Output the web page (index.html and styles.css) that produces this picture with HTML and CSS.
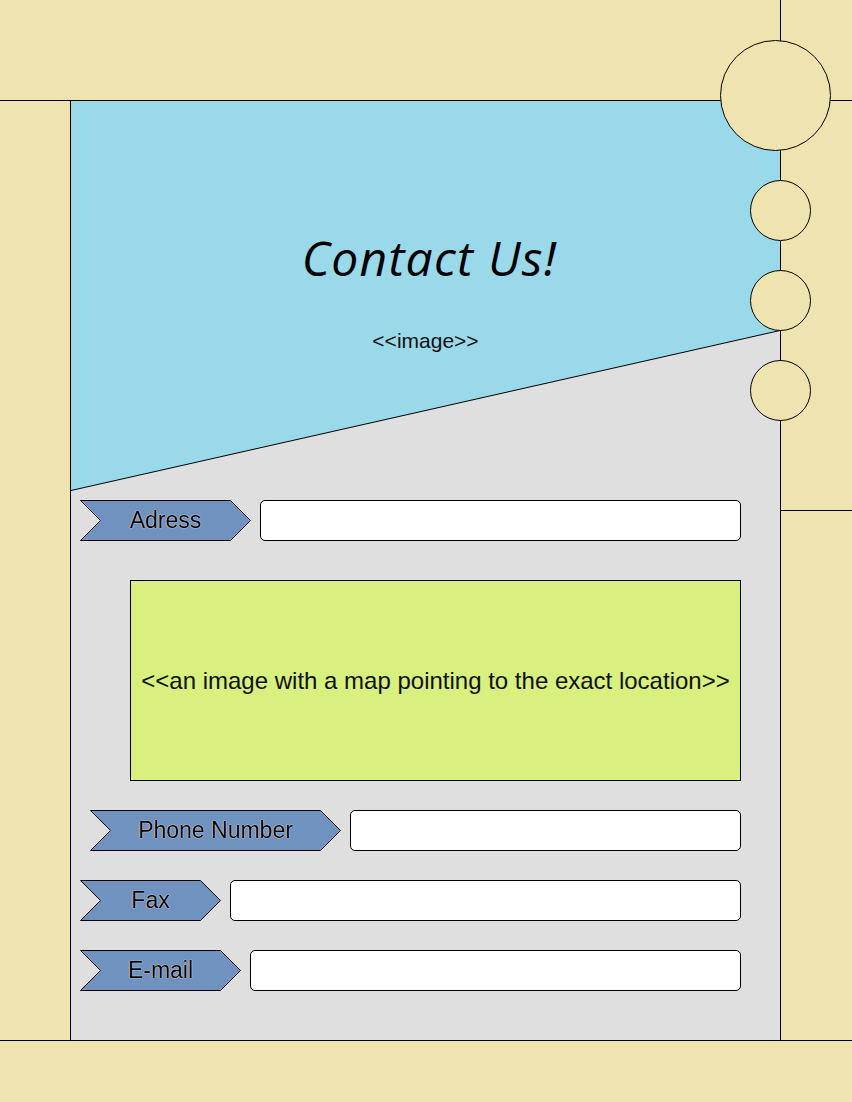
FILE: index.html
```html
<!DOCTYPE html>
<html>
<head>
<meta charset="utf-8">
<title>Contact Us</title>
<link rel="stylesheet" href="styles.css">
</head>
<body>
<div class="page">
  <div class="cell"></div>
  <div class="cell"></div>
  <div class="cell top-right"></div>

  <div class="cell side-left"></div>
  <main class="panel">
    <header class="hero">
      <svg class="hero-bg" width="709" height="390" viewBox="0 0 709 390">
        <polygon points="0,0 709,0 709,229.5 0,389.5" fill="#99d9ea"/>
        <line x1="0" y1="389.5" x2="709" y2="229.5" stroke="#000" stroke-width="1"/>
      </svg>
      <h1 class="title">Contact Us!</h1>
      <p class="hero-image">&lt;&lt;image&gt;&gt;</p>
    </header>
    <form class="form">
      <div class="row row-address">
        <div class="tag tag-address">
          <svg class="tag-bg" width="171" height="41"><polygon points="0.5,0.5 150.5,0.5 170.5,20.5 150.5,40.5 0.5,40.5 20.5,20.5"/></svg>
          <span class="tag-text">Adress</span>
        </div>
        <div class="field"></div>
      </div>
      <div class="map">&lt;&lt;an image with a map pointing to the exact location&gt;&gt;</div>
      <div class="row row-phone">
        <div class="tag tag-phone">
          <svg class="tag-bg" width="251" height="41"><polygon points="0.5,0.5 230.5,0.5 250.5,20.5 230.5,40.5 0.5,40.5 20.5,20.5"/></svg>
          <span class="tag-text">Phone Number</span>
        </div>
        <div class="field"></div>
      </div>
      <div class="row row-fax">
        <div class="tag tag-fax">
          <svg class="tag-bg" width="141" height="41"><polygon points="0.5,0.5 120.5,0.5 140.5,20.5 120.5,40.5 0.5,40.5 20.5,20.5"/></svg>
          <span class="tag-text">Fax</span>
        </div>
        <div class="field"></div>
      </div>
      <div class="row row-email">
        <div class="tag tag-email">
          <svg class="tag-bg" width="161" height="41"><polygon points="0.5,0.5 140.5,0.5 160.5,20.5 140.5,40.5 0.5,40.5 20.5,20.5"/></svg>
          <span class="tag-text">E-mail</span>
        </div>
        <div class="field"></div>
      </div>
    </form>
  </main>
  <div class="cell side-right">
    <div class="side-right-top"></div>
  </div>

  <div class="cell"></div>
  <div class="cell"></div>
  <div class="cell"></div>

  <div class="circle circle-big"></div>
  <div class="circle circle-1"></div>
  <div class="circle circle-2"></div>
  <div class="circle circle-3"></div>
</div>
</body>
</html>
```

FILE: styles.css
```css
* { box-sizing: border-box; }
html, body { margin: 0; padding: 0; }
body {
  background: #efe3b0;
  font-family: "Liberation Sans", Arial, sans-serif;
  color: #111;
}
.page {
  position: relative;
  width: 852px;
  height: 1102px;
  display: grid;
  grid-template-columns: 70px 710px 72px;
  grid-template-rows: 100px 941px 61px;
}
.top-right { border-left: 1px solid #000; }
.side-left {
  border-top: 1px solid #000;
  border-bottom: 1px solid #000;
}
.side-right {
  border-left: 1px solid #000;
  border-top: 1px solid #000;
  border-bottom: 1px solid #000;
}
.side-right-top {
  height: 410px;
  border-bottom: 1px solid #000;
}
.panel {
  border-top: 1px solid #000;
  border-left: 1px solid #000;
  border-bottom: 1px solid #000;
  background: #dfdfdf;
  display: flex;
  flex-direction: column;
}
.hero {
  position: relative;
  height: 390px;
  display: flex;
  flex-direction: column;
  align-items: center;
}
.hero-bg {
  position: absolute;
  left: 0;
  top: 0;
  display: block;
}
.title {
  position: relative;
  margin: 127px 0 0 8px;
  font-family: "Open Sans", "DejaVu Sans", sans-serif;
  font-style: italic;
  font-weight: 400;
  font-size: 48px;
  letter-spacing: 1.3px;
  line-height: 60px;
  color: #000;
}
.hero-image {
  position: relative;
  margin: 41px 0 0 0;
  font-size: 21px;
  line-height: 24px;
  color: #111;
}
.form {
  padding: 9px 39px 0 9px;
  display: flex;
  flex-direction: column;
}
.row {
  display: flex;
  gap: 9px;
  height: 41px;
}
.row-phone { margin: 29px 0 0 10px; }
.row-fax, .row-email { margin-top: 29px; }
.tag {
  position: relative;
  flex: none;
  height: 41px;
  display: flex;
  align-items: center;
  justify-content: center;
}
.tag-address { width: 171px; }
.tag-phone { width: 251px; }
.tag-fax { width: 141px; }
.tag-email { width: 161px; }
.tag-bg {
  position: absolute;
  left: 0;
  top: 0;
  display: block;
}
.tag-bg polygon {
  fill: #7092be;
  stroke: #000;
  stroke-width: 1;
}
.tag-text {
  position: relative;
  font-size: 23px;
  color: #000;
  text-shadow: 0 0 1px #fff, 0 0 1px #fff;
}
.field {
  flex: 1;
  background: #fff;
  border: 1px solid #000;
  border-radius: 5px;
}
.map {
  margin: 39px 0 0 50px;
  height: 201px;
  background: #d7f07e;
  border: 1px solid #000;
  display: flex;
  align-items: center;
  justify-content: center;
  font-size: 24px;
  color: #111;
}
.circle {
  position: absolute;
  border: 1px solid #000;
  border-radius: 50%;
  background: #efe3b0;
}
.circle-big { left: 720px; top: 40px; width: 111px; height: 111px; }
.circle-1 { left: 750px; top: 180px; width: 61px; height: 61px; }
.circle-2 { left: 750px; top: 270px; width: 61px; height: 61px; }
.circle-3 { left: 750px; top: 360px; width: 61px; height: 61px; }
```
